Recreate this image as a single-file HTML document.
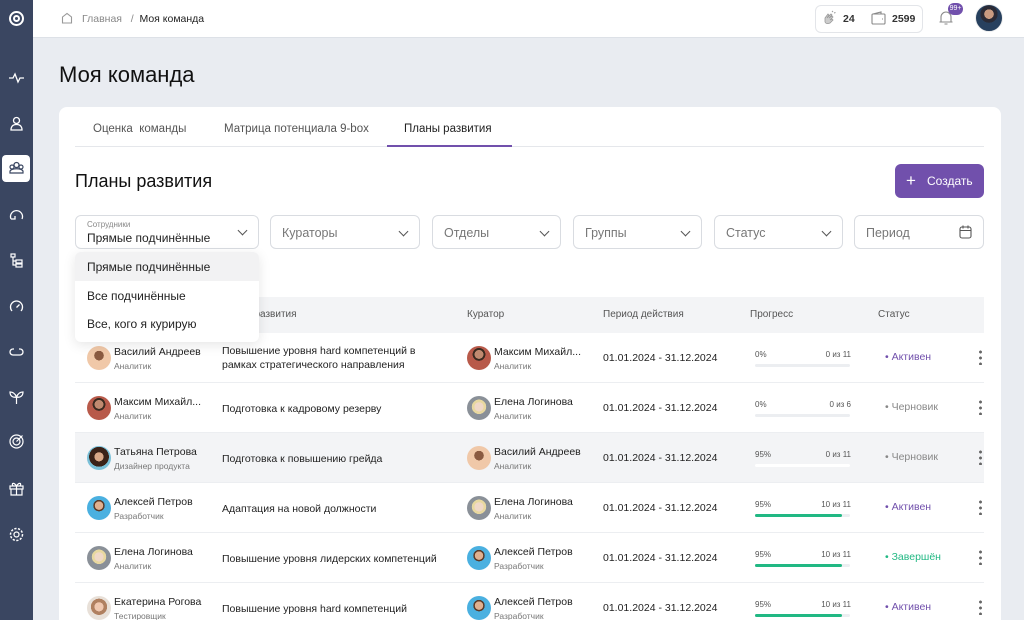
<!DOCTYPE html>
<html><head><meta charset="utf-8"><style>
*{box-sizing:border-box;margin:0;padding:0}
html,body{width:1024px;height:620px;overflow:hidden}
body{background:#e9ecf1;font-family:"Liberation Sans",sans-serif;color:#1f1f1f;position:relative}
.side{position:absolute;left:0;top:0;width:33px;height:620px;background:#3a4661}
.si{position:absolute;left:8px;width:17px;height:17px}
.top{position:absolute;left:33px;top:0;right:0;height:38px;background:#fff;border-bottom:1px solid #dde1e7}
.abs{position:absolute}
.card{position:absolute;left:59px;top:107px;width:942px;height:513px;background:#fff;border-radius:8px 8px 0 0}
.f{position:absolute;top:215px;height:34px;border:1px solid #d9dce1;border-radius:6px;font-size:12.5px;color:#777;padding:10px 11px}
.chev{position:absolute;right:12px;top:12px;width:7px;height:7px;border-right:1.4px solid #555;border-bottom:1.4px solid #555;transform:rotate(45deg)}
.row{position:absolute;left:75px;width:909px;height:50px;border-bottom:1px solid #eceef1;font-size:10.5px}
.av{position:absolute;width:24px;height:24px;border-radius:50%;top:13px}
.nm{position:absolute;top:13px;font-size:10.5px;color:#1f1f1f;white-space:nowrap}
.rl{position:absolute;top:28px;font-size:8.5px;color:#777}
.pl{position:absolute;left:147px;font-size:10.5px;line-height:14px}
.pd{position:absolute;left:528px;top:19px;font-size:10.5px}
.pp{position:absolute;left:680px;top:17px;font-size:8px;color:#555}
.pc{position:absolute;left:740px;width:36px;text-align:right;top:17px;font-size:8px;color:#555}
.bar{position:absolute;left:680px;top:31px;width:95px;height:3px;background:#eceef1;border-radius:2px}
.bar i{display:block;height:3px;width:87px;background:#21b883;border-radius:2px}
.st{position:absolute;left:810px;top:18px;font-size:10.5px}
.dots{position:absolute;left:904px;top:16px;width:3px;height:16px;background:radial-gradient(circle,#666 1.3px,transparent 1.6px) 0 0/3px 6px repeat-y}
</style></head><body>
<div class="side">
<svg class="si" style="top:10px" viewBox="0 0 17 17"><circle cx="8.5" cy="8.5" r="6.5" fill="none" stroke="#fff" stroke-width="2"/><circle cx="8.5" cy="8.5" r="2.5" fill="none" stroke="#fff" stroke-width="2"/></svg>
<svg class="si" style="top:69px" viewBox="0 0 17 17"><path d="M1 9h4l2-4 3 8 2-4h4" fill="none" stroke="#fff" stroke-width="1.3"/></svg>
<svg class="si" style="top:115px" viewBox="0 0 17 17"><circle cx="8.5" cy="5.5" r="3" fill="none" stroke="#fff" stroke-width="1.3"/><path d="M3 15c0-4 2-5.5 5.5-5.5S14 11 14 15z" fill="none" stroke="#fff" stroke-width="1.3"/></svg>
<div class="abs" style="left:2px;top:155px;width:28px;height:27px;background:#fff;border-radius:4px"></div>
<svg class="si" style="top:160px;left:8px" viewBox="0 0 17 17"><circle cx="8.5" cy="5" r="2.5" fill="none" stroke="#3a4661" stroke-width="1.3"/><circle cx="4" cy="7" r="2" fill="none" stroke="#3a4661" stroke-width="1.2"/><circle cx="13" cy="7" r="2" fill="none" stroke="#3a4661" stroke-width="1.2"/><path d="M2 13h13v-2c-2-3-11-3-13 0z" fill="none" stroke="#3a4661" stroke-width="1.2"/></svg>
<svg class="si" style="top:206px" viewBox="0 0 17 17"><path d="M3 13a6 6 0 1 1 11 0M3 13h4v-3" fill="none" stroke="#fff" stroke-width="1.3"/></svg>
<svg class="si" style="top:252px" viewBox="0 0 17 17"><rect x="3" y="2" width="4" height="3" fill="none" stroke="#fff" stroke-width="1.2"/><rect x="8" y="8" width="6" height="3" fill="none" stroke="#fff" stroke-width="1.2"/><rect x="8" y="12" width="6" height="3" fill="none" stroke="#fff" stroke-width="1.2"/><path d="M5 5v8h3M5 9h3" fill="none" stroke="#fff" stroke-width="1.2"/></svg>
<svg class="si" style="top:298px" viewBox="0 0 17 17"><path d="M4 13a6 6 0 1 1 9 0M8.5 9.5l3-3" fill="none" stroke="#fff" stroke-width="1.3"/></svg>
<svg class="si" style="top:343px" viewBox="0 0 17 17"><path d="M6 6H5a3 3 0 0 0 0 6h7a3 3 0 0 0 0-6h-1" fill="none" stroke="#fff" stroke-width="1.3"/></svg>
<svg class="si" style="top:388px" viewBox="0 0 17 17"><path d="M8.5 16V9M8.5 9C7 5 4 4 2 4c0 4 3 6 6.5 5zM8.5 9c1.5-4 4.5-5 6.5-5 0 4-3 6-6.5 5z" fill="none" stroke="#fff" stroke-width="1.2"/></svg>
<svg class="si" style="top:433px" viewBox="0 0 17 17"><circle cx="8.5" cy="8.5" r="6.5" fill="none" stroke="#fff" stroke-width="1.2"/><circle cx="8.5" cy="8.5" r="3.5" fill="none" stroke="#fff" stroke-width="1.2"/><path d="M8.5 8.5l6-6" stroke="#fff" stroke-width="1.2"/></svg>
<svg class="si" style="top:480px" viewBox="0 0 17 17"><rect x="2" y="6" width="13" height="3" fill="none" stroke="#fff" stroke-width="1.2"/><path d="M3 9v6h11V9M8.5 6v9M8.5 6C6 2 3 3 5 6M8.5 6c2.5-4 5.5-3 3.5 0" fill="none" stroke="#fff" stroke-width="1.2"/></svg>
<svg class="si" style="top:526px" viewBox="0 0 17 17"><circle cx="8.5" cy="8.5" r="2.5" fill="none" stroke="#fff" stroke-width="1.2"/><circle cx="8.5" cy="8.5" r="6" fill="none" stroke="#fff" stroke-width="1.5" stroke-dasharray="2.2 1.5"/></svg>
</div>
<div class="top">
<svg class="abs" style="left:28px;top:12px" width="12" height="12" viewBox="0 0 12 12"><path d="M1.5 5L6 1.5 10.5 5v6h-9z" fill="none" stroke="#999" stroke-width="1.1"/></svg>
<div class="abs" style="left:49px;top:13px;font-size:10.5px;color:#888">Главная&nbsp;&nbsp; /&nbsp; <span style="color:#222">Моя команда</span></div>
<div class="abs" style="left:782px;top:5px;width:108px;height:28px;border:1px solid #e3e5e9;border-radius:6px"></div>
<svg class="abs" style="left:789px;top:10px" width="16" height="16" viewBox="0 0 16 16"><path d="M3 8l3-4 1 1-2 3 4-4 1 1-3 3 3-2 1 1-3 3 2-1 1 1-3 3c-2 1-4 1-5-1z" fill="#ccc" stroke="#999" stroke-width="0.8"/><path d="M10 2l1-1M12 3l1.5-.5" stroke="#999"/></svg>
<div class="abs" style="left:810px;top:13px;font-size:10.5px;font-weight:bold;color:#333">24</div>
<svg class="abs" style="left:838px;top:11px" width="15" height="14" viewBox="0 0 15 14"><rect x="1" y="3" width="13" height="10" rx="1" fill="none" stroke="#888" stroke-width="1.1"/><path d="M2 3l8-2v2M11 8h1" stroke="#888" fill="none" stroke-width="1.1"/></svg>
<div class="abs" style="left:859px;top:13px;font-size:10.5px;font-weight:bold;color:#333">2599</div>
<svg class="abs" style="left:906px;top:10px" width="14" height="16" viewBox="0 0 14 16"><path d="M2 12V7a5 5 0 0 1 10 0v5h1.5H.5zM5.5 14h3" fill="none" stroke="#888" stroke-width="1.1"/></svg>
<div class="abs" style="left:915px;top:3px;width:15px;height:12px;border-radius:6px;background:#7150ac;color:#fff;font-size:7px;text-align:center;line-height:12px">99+</div>
<div class="abs" style="left:942px;top:4px;width:28px;height:28px;border-radius:50%;background:radial-gradient(circle at 50% 35%,#c89a80 0 22%,#2a2a35 23% 40%,#27405e 41%);border:1px solid #eee"></div>
</div>
<div class="abs" style="left:59px;top:62px;font-size:22px;color:#111">Моя команда</div>
<div class="card"></div>
<div class="abs" style="left:75px;top:146px;width:909px;height:1px;background:#e5e7eb"></div>
<div class="abs" style="left:93px;top:123px;font-size:11.5px;color:#555">Оценка&nbsp; команды</div>
<div class="abs" style="left:224px;top:123px;font-size:11.5px;color:#555">Матрица потенциала 9-box</div>
<div class="abs" style="left:404px;top:123px;font-size:11.5px;color:#222">Планы развития</div>
<div class="abs" style="left:387px;top:145px;width:125px;height:2px;background:#7150ac"></div>
<div class="abs" style="left:75px;top:171px;font-size:18px;color:#111">Планы развития</div>
<div class="abs" style="left:895px;top:164px;width:89px;height:34px;border-radius:6px;background:#7150ac;color:#fff;font-size:12px;padding:10px 0 0 32px">Создать</div>
<div class="abs" style="left:906px;top:174px;color:#fff;font-size:17px;line-height:14px;font-weight:300">+</div>
<div class="f" style="left:75px;width:184px;padding-top:4px"><div style="font-size:8px;color:#888">Сотрудники</div><div style="color:#222;font-size:12px;margin-top:2px">Прямые подчинённые</div><span class="chev" style="top:11px"></span></div>
<div class="f" style="left:270px;width:150px">Кураторы<span class="chev"></span></div>
<div class="f" style="left:432px;width:129px">Отделы<span class="chev"></span></div>
<div class="f" style="left:573px;width:129px">Группы<span class="chev"></span></div>
<div class="f" style="left:714px;width:129px">Статус<span class="chev"></span></div>
<div class="f" style="left:854px;width:130px">Период<svg class="abs" style="right:11px;top:9px" width="13" height="14" viewBox="0 0 13 14"><rect x="1" y="2" width="11" height="11" rx="2" fill="none" stroke="#555" stroke-width="1.1"/><path d="M1 5.5h11M4 0.5v3M9 0.5v3" stroke="#555" stroke-width="1.1"/></svg></div>
<div class="abs" style="left:75px;top:297px;width:909px;height:36px;background:#f3f4f6;font-size:10px;color:#555">
<span class="abs" style="left:147px;top:12px">Плана развития</span><span class="abs" style="left:392px;top:12px">Куратор</span><span class="abs" style="left:528px;top:12px">Период действия</span><span class="abs" style="left:675px;top:12px">Прогресс</span><span class="abs" style="left:803px;top:12px">Статус</span></div>

<div class="row" style="top:333px"><div class="av" style="left:12px;background:radial-gradient(circle at 50% 40%,#8a5a40 0 25%,#f0c8a8 26%)"></div><div class="nm" style="left:39px">Василий Андреев</div><div class="rl" style="left:39px">Аналитик</div><div class="pl" style="top:11px">Повышение уровня hard компетенций в<br>рамках стратегического направления</div><div class="av" style="left:392px;background:radial-gradient(circle at 50% 35%,#c08a70 0 22%,#3a2a20 23% 32%,#b85a4a 33%)"></div><div class="nm" style="left:419px">Максим Михайл...</div><div class="rl" style="left:419px">Аналитик</div><div class="pd">01.01.2024 - 31.12.2024</div><div class="pp">0%</div><div class="pc">0 из 11</div><div class="bar"></div><div class="st" style="color:#7150ac">• Активен</div><div class="dots"></div></div>
<div class="row" style="top:383px"><div class="av" style="left:12px;background:radial-gradient(circle at 50% 35%,#c08a70 0 22%,#3a2a20 23% 32%,#b85a4a 33%)"></div><div class="nm" style="left:39px">Максим Михайл...</div><div class="rl" style="left:39px">Аналитик</div><div class="pl" style="top:19px">Подготовка к кадровому резерву</div><div class="av" style="left:392px;background:radial-gradient(circle at 50% 45%,#f0d8c8 0 25%,#e8d8a0 26% 40%,#8a9098 41%)"></div><div class="nm" style="left:419px">Елена Логинова</div><div class="rl" style="left:419px">Аналитик</div><div class="pd">01.01.2024 - 31.12.2024</div><div class="pp">0%</div><div class="pc">0 из 6</div><div class="bar"></div><div class="st" style="color:#888">• Черновик</div><div class="dots"></div></div>
<div class="row" style="top:433px;background:#f3f4f6"><div class="av" style="left:12px;background:radial-gradient(circle at 50% 45%,#d8a888 0 25%,#3a2218 26% 55%,#7ac0d8 56%)"></div><div class="nm" style="left:39px">Татьяна Петрова</div><div class="rl" style="left:39px">Дизайнер продукта</div><div class="pl" style="top:19px">Подготовка к повышению грейда</div><div class="av" style="left:392px;background:radial-gradient(circle at 50% 40%,#8a5a40 0 25%,#f0c8a8 26%)"></div><div class="nm" style="left:419px">Василий Андреев</div><div class="rl" style="left:419px">Аналитик</div><div class="pd">01.01.2024 - 31.12.2024</div><div class="pp">95%</div><div class="pc">0 из 11</div><div class="bar" style="background:#fff"></div><div class="st" style="color:#888">• Черновик</div><div class="dots"></div></div>
<div class="row" style="top:483px"><div class="av" style="left:12px;background:radial-gradient(circle at 50% 40%,#e0b090 0 22%,#5a3a28 23% 30%,#4ab0e0 31%)"></div><div class="nm" style="left:39px">Алексей Петров</div><div class="rl" style="left:39px">Разработчик</div><div class="pl" style="top:19px">Адаптация на новой должности</div><div class="av" style="left:392px;background:radial-gradient(circle at 50% 45%,#f0d8c8 0 25%,#e8d8a0 26% 40%,#8a9098 41%)"></div><div class="nm" style="left:419px">Елена Логинова</div><div class="rl" style="left:419px">Аналитик</div><div class="pd">01.01.2024 - 31.12.2024</div><div class="pp">95%</div><div class="pc">10 из 11</div><div class="bar"><i></i></div><div class="st" style="color:#7150ac">• Активен</div><div class="dots"></div></div>
<div class="row" style="top:533px"><div class="av" style="left:12px;background:radial-gradient(circle at 50% 45%,#f0d8c8 0 25%,#e8d8a0 26% 40%,#8a9098 41%)"></div><div class="nm" style="left:39px">Елена Логинова</div><div class="rl" style="left:39px">Аналитик</div><div class="pl" style="top:19px">Повышение уровня лидерских компетенций</div><div class="av" style="left:392px;background:radial-gradient(circle at 50% 40%,#e0b090 0 22%,#5a3a28 23% 30%,#4ab0e0 31%)"></div><div class="nm" style="left:419px">Алексей Петров</div><div class="rl" style="left:419px">Разработчик</div><div class="pd">01.01.2024 - 31.12.2024</div><div class="pp">95%</div><div class="pc">10 из 11</div><div class="bar"><i></i></div><div class="st" style="color:#21b883">• Завершён</div><div class="dots"></div></div>
<div class="row" style="top:583px"><div class="av" style="left:12px;background:radial-gradient(circle at 50% 45%,#f0c8b0 0 25%,#b08060 26% 45%,#e8e0d8 46%)"></div><div class="nm" style="left:39px">Екатерина Рогова</div><div class="rl" style="left:39px">Тестировщик</div><div class="pl" style="top:19px">Повышение уровня hard компетенций</div><div class="av" style="left:392px;background:radial-gradient(circle at 50% 40%,#e0b090 0 22%,#5a3a28 23% 30%,#4ab0e0 31%)"></div><div class="nm" style="left:419px">Алексей Петров</div><div class="rl" style="left:419px">Разработчик</div><div class="pd">01.01.2024 - 31.12.2024</div><div class="pp">95%</div><div class="pc">10 из 11</div><div class="bar"><i></i></div><div class="st" style="color:#7150ac">• Активен</div><div class="dots"></div></div>

<div class="abs" style="left:75px;top:252px;width:184px;height:90px;background:#fff;border-radius:6px;box-shadow:0 3px 12px rgba(0,0,0,.1);font-size:12px;color:#222;overflow:hidden">
<div style="height:29px;background:#f2f2f3;padding:8px 12px">Прямые подчинённые</div>
<div style="height:29px;padding:8px 12px">Все подчинённые</div>
<div style="height:29px;padding:7px 12px">Все, кого я курирую</div>
</div>
</body></html>
